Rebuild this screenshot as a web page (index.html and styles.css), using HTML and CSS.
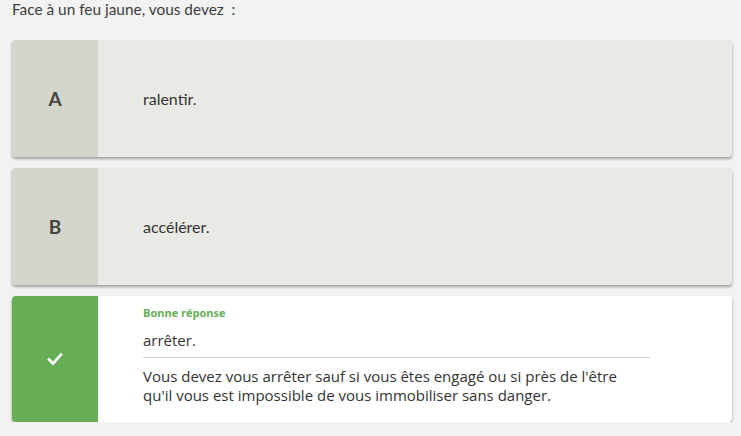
FILE: index.html
```html
<!DOCTYPE html>
<html lang="fr">
<head>
<meta charset="utf-8">
<link rel="stylesheet" href="styles.css">
</head>
<body>
<p class="question">Face à un feu jaune, vous devez &nbsp;:</p>
<div class="answers">
  <div class="card">
    <div class="letter">A</div>
    <div class="body"><span class="text">ralentir.</span></div>
  </div>
  <div class="card">
    <div class="letter">B</div>
    <div class="body"><span class="text">accélérer.</span></div>
  </div>
  <div class="card correct">
    <div class="letter">
      <svg width="16" height="14" viewBox="0 0 16 14"><path d="M2 7.5 L6 11.5 L14 2.5" fill="none" stroke="#fff" stroke-width="2.6" stroke-linecap="square"/></svg>
    </div>
    <div class="body detail">
      <div class="label">Bonne réponse</div>
      <div class="answer">arrêter.</div>
      <div class="explain">Vous devez vous arrêter sauf si vous êtes engagé ou si près de l'être qu'il vous est impossible de vous immobiliser sans danger.</div>
    </div>
  </div>
</div>
</body>
</html>
```
FILE: styles.css
```css
html, body {
  margin: 0;
  padding: 0;
  background: #f2f2f2;
}
body {
  font-family: Lato, "Open Sans", sans-serif;
  color: #3d3d3d;
  padding: 0 9px 0 12px;
}
.question {
  margin: 0;
  padding-top: 0;
  font-size: 15.4px;
  line-height: 19px;
  height: 40px;
}
.answers {
  display: flex;
  flex-direction: column;
  gap: 11px;
}
.card {
  display: flex;
  height: 117px;
  border-radius: 4px;
  overflow: hidden;
  box-shadow: 0 2px 3px rgba(0,0,0,0.35);
  background: #e9eae5;
}
.letter {
  width: 86px;
  flex: none;
  background: #d4d6cc;
  display: flex;
  align-items: center;
  justify-content: center;
  font-weight: bold;
  font-size: 19px;
  color: #444;
}
.body {
  flex: 1;
  display: flex;
  align-items: center;
  padding-left: 45px;
}
.text {
  font-size: 16px;
  color: #333;
}
.correct {
  height: 126px;
  background: #fff;
}
.correct .letter {
  background: #65ae55;
}
.detail {
  flex-direction: column;
  align-items: flex-start;
  justify-content: flex-start;
  padding-top: 10px;
  font-family: "Open Sans", sans-serif;
}
.label {
  font-size: 11px;
  font-weight: bold;
  color: #65ae55;
  line-height: 14px;
}
.answer {
  font-size: 15px;
  line-height: 20px;
  margin-top: 10px;
  padding-bottom: 7px;
  width: 507px;
  border-bottom: 1px solid #d4d6cc;
  color: #333;
}
.explain {
  font-size: 15px;
  line-height: 19px;
  margin-top: 9px;
  width: 500px;
  color: #333;
}
```
